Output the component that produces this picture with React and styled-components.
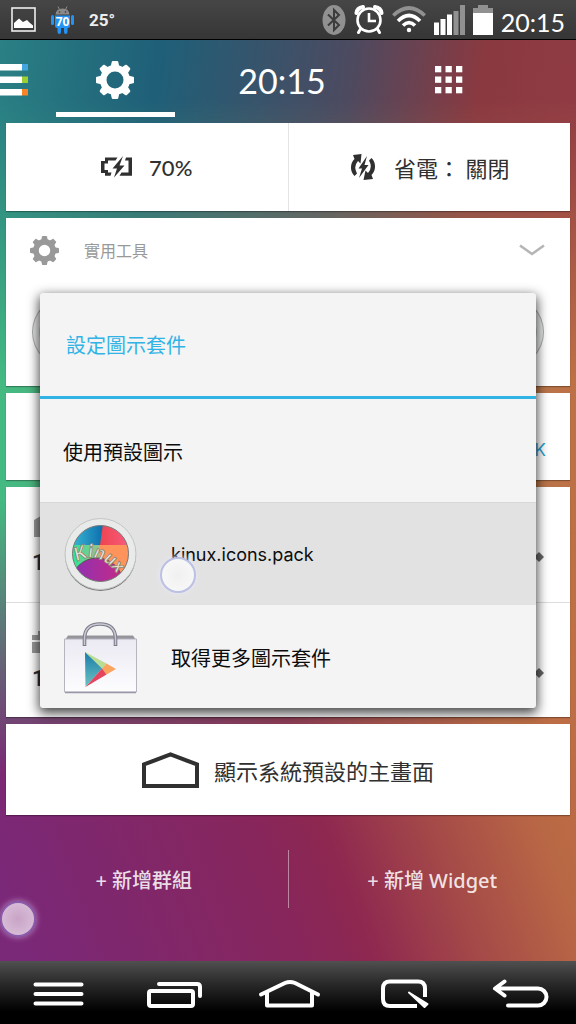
import React from 'react'
import styled, { createGlobalStyle, css } from 'styled-components'

const GlobalStyle = createGlobalStyle`
  * {
    box-sizing: border-box;
  }
  body {
    margin: 0;
    background-color: black;
    font-family: Inter, 'Noto Sans CJK TC', sans-serif;
  }
  button {
    border: 0;
    padding: 0;
    background: none;
    color: inherit;
    font: inherit;
    cursor: pointer;
  }
  h2, p, ul {
    margin: 0;
    padding: 0;
    font-weight: 400;
  }
  svg {
    display: block;
    flex: none;
  }
`

const Screen = styled.div`
  display: flex;
  flex-direction: column;
  min-height: 100vh;
`

const StatusBar = styled.div`
  display: flex;
  align-items: center;
  justify-content: space-between;
  height: 40px;
  padding: 0 11px;
  border-bottom: 1px solid black;
  background: linear-gradient(#464646, #363636);
  color: white;
`
const StatusGroup = styled.div`
  display: flex;
  align-items: center;
  gap: ${props => props.$gap}px;
`
const Temperature = styled.span`
  font: 700 17px/24px Roboto, sans-serif;
  color: #eee;
`
const StatusTime = styled.span`
  font: 25px/28px Lato, sans-serif;
  padding-top: 4px;
`

// three colour bands, the upper and lower ones fade into the middle one
const Wallpaper = styled.main`
  position: relative;
  isolation: isolate;
  flex: 1;
  background: linear-gradient(90deg, #43ba82, #7f9068 50%, #bf7045);
  &::before,
  &::after {
    content: '';
    position: absolute;
    inset: 0;
    z-index: -1;
  }
  &::before {
    background: linear-gradient(
      98deg,
      #2a8084,
      #1f5f78 23%,
      #4c4a60 50%,
      #8a3940 69%,
      #983e49
    );
    mask-image: linear-gradient(black 60px, transparent 340px);
  }
  &::after {
    background: linear-gradient(
      70deg,
      #7a2878 3%,
      #87265c 33%,
      #8e2850 41%,
      #a54a48 53%,
      #b96845 65%,
      #bf6f44 75%
    );
    mask-image: linear-gradient(transparent 50%, black 80%);
  }
`

const Header = styled.header`
  display: flex;
  height: 77px;
  margin-bottom: 6px;
  padding-right: 44px;
  color: white;
`
const DrawerButton = styled.button`
  width: 32px;
  padding-top: 3px;
`
const Tab = styled.button`
  display: flex;
  flex: 1;
  align-items: center;
  justify-content: center;
  margin: 0 24px;
  padding-top: 8px;
  border-bottom: 5px solid ${props => (props.$active ? 'white' : 'transparent')};
  font: 34px Lato, sans-serif;
`

const Cards = styled.div`
  display: flex;
  flex-direction: column;
  gap: 7px;
  padding: 0 6px;
`
const Card = styled.section`
  display: flex;
  flex-direction: ${props => (props.$column ? 'column' : 'row')};
  min-height: ${props => props.$height}px;
  background-color: white;
  box-shadow: 0 1px 1px rgba(0, 0, 0, 0.3);
  color: #303030;
`
const CardButton = styled.button`
  display: flex;
  flex: 1;
  align-items: center;
  justify-content: center;
  gap: ${props => props.$gap || 17}px;
  font: ${props => (props.$medium ? 500 : 400)} 22px Lato, 'Noto Sans CJK TC', sans-serif;
  & + & {
    border-left: 1px solid #e4e4e4;
  }
`
const GroupHeader = styled.button`
  display: flex;
  align-items: center;
  gap: 25px;
  height: 64px;
  padding: 0 25px 0 24px;
  color: #999;
  font-size: 16px;
  svg:last-child {
    margin-left: auto;
  }
`
const AppRow = styled.div`
  display: flex;
  justify-content: space-between;
  padding: 14px 26px;
`
const AppButton = styled.button`
  width: 72px;
  height: 72px;
  border: 1px solid #aaa;
  border-bottom-color: #777;
  border-radius: 50%;
  background: radial-gradient(#777 0 27px, #e6e8e8 29px);
`
const OkCard = styled(Card)`
  align-items: flex-end;
  justify-content: flex-end;
  padding: 18px 24px;
`
const OkButton = styled.button`
  color: #2a9fd0;
  font-size: 17px;
  line-height: 24px;
`
const PlaceRow = styled.button`
  display: flex;
  flex: 1;
  align-items: center;
  justify-content: space-between;
  padding: 2px 26px 0;
  text-align: left;
  color: #777;
  & + & {
    border-top: 1px solid #ddd;
  }
`
const Count = styled.p`
  padding-top: 12px;
  color: #303030;
  font: 500 22px/28px Roboto, sans-serif;
`
const RowArrow = styled.svg`
  margin-top: 24px;
`

const Actions = styled.div`
  display: flex;
  align-items: center;
  padding: 35px 0 53px;
`
const Action = styled.button`
  flex: 1;
  height: 58px;
  color: rgba(255, 255, 255, 0.85);
  font: 500 20px 'Noto Sans', 'Noto Sans CJK TC', sans-serif;
  & + & {
    border-left: 1px solid rgba(255, 255, 255, 0.45);
  }
`

const Overlay = styled.div`
  position: absolute;
  inset: 0;
  display: flex;
  align-items: center;
  padding: 0 40px;
`
const Dialog = styled.div`
  flex: 1;
  border-radius: 3px;
  background-color: #f4f4f4;
  box-shadow: 0 4px 12px 1px rgba(0, 0, 0, 0.75);
  color: #0c0c0c;
`
const DialogTitle = styled.h2`
  display: flex;
  align-items: center;
  height: 106px;
  padding: 0 26px;
  border-bottom: 3px solid #31b3e6;
  color: #31b3e6;
  font-size: 20px;
`
const OptionList = styled.ul`
  list-style: none;
`
const Option = styled.button`
  display: flex;
  align-items: center;
  gap: 33px;
  width: 100%;
  height: 103px;
  padding: 2px 23px 0;
  font-size: ${props => (props.$latin ? 18 : 20)}px;
  ${props =>
    props.$pressed &&
    css`
      background-color: #e2e2e2;
      box-shadow: inset 0 1px #d8d8d8;
    `}
`

const Touch = styled.span`
  position: absolute;
  left: ${props => props.$x}px;
  top: ${props => props.$y}px;
  width: 36px;
  height: 36px;
  border: 2px solid ${props => (props.$faded ? '#8a5cab' : '#bcc0e2')};
  border-radius: 50%;
  background: ${props =>
    props.$faded
      ? 'radial-gradient(#c9a3c6, #dcc5dd)'
      : 'radial-gradient(#f0f0f0, #fafafa)'};
  box-shadow: 0 0 6px ${props => (props.$faded ? '#b98fc4' : '#e8e8f8')};
  pointer-events: none;
`

const NavBar = styled.nav`
  display: grid;
  grid-template-columns: repeat(5, 1fr);
  height: 63px;
  background: linear-gradient(#505050, #2a2a2a 35%, black 80%);
`
const NavButton = styled.button`
  display: flex;
  align-items: center;
  justify-content: center;
`

const teeth = [0, 45, 90, 135, 180, 225, 270, 315]

function Gear({ size, hole }) {
  return (
    <svg width={size} height={size} viewBox="0 0 38 38" fill="currentColor">
      {teeth.map(angle => (
        <path
          key={angle}
          d="M14.6 6 L15.8 .8 Q16 0 16.800 0 H21.200 Q22 0 22.200 .8 L23.400 6Z"
          transform={`rotate(${angle} 19 19)`}
        />
      ))}
      <circle
        cx="19"
        cy="19"
        r={(15 + hole) / 2}
        fill="none"
        stroke="currentColor"
        strokeWidth={15 - hole}
      />
    </svg>
  )
}

function PictureIcon() {
  return (
    <svg width="25" height="25" viewBox="0 0 25 25">
      <rect x="1" y="1" width="23" height="23" fill="none" stroke="#eee" strokeWidth="1.6" />
      <path d="M3 21 V16 L8 11.5 L12 15 L16 13 L19 16 L22 18.5 V21Z" fill="white" />
    </svg>
  )
}

function RobotIcon() {
  return (
    <svg width="23" height="28" viewBox="0 0 23 28">
      <path d="M4.5 8.5 Q5 2.5 11.5 2.5 T18.5 8.5Z" fill="#8a8a8a" />
      <path d="M7 .5 L8.5 3.5 M16 .5 L14.5 3.5" stroke="#8a8a8a" />
      <circle cx="8.5" cy="6" r=".8" fill="#333" />
      <circle cx="14.5" cy="6" r=".8" fill="#333" />
      <g fill="#2393f5">
        <path d="M4 9.500 H19 V20 Q19 22 17 22 H16.500 V26 Q16.500 28 14.700 28 T13 26 V22 H10 V26 Q10 28 8.300 28 T6.500 26 V22 H6 Q4 22 4 20Z" />
        <rect y="9" width="3" height="10" rx="1.500" />
        <rect x="20" y="9" width="3" height="10" rx="1.500" />
      </g>
      <text
        x="11.500"
        y="19.500"
        textAnchor="middle"
        fontFamily="Open Sans, sans-serif"
        fontSize="12"
        fontWeight="700"
        fill="white"
      >
        70
      </text>
    </svg>
  )
}

function BluetoothIcon() {
  return (
    <svg width="24" height="30" viewBox="0 0 24 30">
      <ellipse cx="12" cy="15" rx="11.500" ry="15" fill="#919191" />
      <path d="M6 9.500 L17 20 L12 25 V5 L17 10 L6 20.500" fill="none" stroke="#3c3c3c" strokeWidth="2" />
    </svg>
  )
}

function AlarmIcon() {
  return (
    <svg width="30" height="29" viewBox="0 0 30 29" fill="none" stroke="white">
      <circle cx="15" cy="15" r="11.500" strokeWidth="2.600" />
      <path d="M15 8 V16 H22" strokeWidth="2.600" />
      <path d="M2.500 8 Q3 3 9 2 M27.500 8 Q27 3 21 2" strokeWidth="4" strokeLinecap="round" />
      <path d="M6.500 24 L4.500 27.500 M23.500 24 L25.500 27.500" strokeWidth="3" strokeLinecap="round" />
    </svg>
  )
}

function WifiIcon() {
  return (
    <svg width="34" height="27" viewBox="0 0 34 27" fill="none" stroke="white" strokeWidth="3.600">
      <path d="M1.300 9.500 Q17 -5.500 32.700 9.500" stroke="#919191" />
      <path d="M6 15 Q17 4 28 15" />
      <path d="M11 19.500 Q17 13.500 23 19.500" />
      <circle cx="17" cy="24" r="2.200" fill="white" stroke="none" />
    </svg>
  )
}

function SignalIcon() {
  return (
    <svg width="31" height="30" viewBox="0 0 31 30" fill="white">
      <rect y="17.500" width="5" height="12.500" />
      <rect x="6.500" y="14" width="5" height="16" />
      <rect x="13" y="9.500" width="5" height="20.500" />
      <rect x="19.500" y="6" width="5" height="24" fill="#919191" />
      <rect x="26" width="5" height="30" fill="#919191" />
    </svg>
  )
}

function BatteryIcon() {
  return (
    <svg width="20" height="30" viewBox="0 0 20 30">
      <path d="M5 0 H15 V3 H20 V8 H0 V3 H5Z" fill="#919191" />
      <rect y="8" width="20" height="22" fill="white" />
    </svg>
  )
}

function DrawerIcon() {
  return (
    <svg width="28" height="32" viewBox="0 0 28 32">
      <path d="M0 0 H22 V6.500 H0Z M0 12.500 H22 V19 H0Z M0 25 H22 V31.500 H0Z" fill="white" />
      <rect x="22" width="6" height="6.500" fill="#45a5de" />
      <rect x="22" y="12.500" width="6" height="6.500" fill="#9bcf35" />
      <rect x="22" y="25" width="6" height="6.500" fill="#fb8427" />
    </svg>
  )
}

function GridIcon() {
  return (
    <svg width="28" height="28" viewBox="0 0 28 28" fill="white">
      {[0, 10.5, 21].map(y =>
        [0, 10.5, 21].map(x => <rect key={`${x} ${y}`} x={x} y={y} width="6.300" height="6.300" />)
      )}
    </svg>
  )
}

function ChargeIcon() {
  return (
    <svg width="31" height="22" viewBox="0 0 31 22" fill="#303030">
      <path d="M16.500 1.500 L14.500 4.500 H7 V7.500 H3.500 V14 H7 V16.500 H10.500 L9.500 19.800 H4 V17 H0 V5 H4 V1.500Z" />
      <path d="M22 0 L11.500 12.500 H16 L13 21.500 L23.500 9.500 H18.500Z" />
      <path d="M25 1.500 H31 V19.800 H18.500 L20.500 16.500 H27.500 V4.500 H24Z" />
    </svg>
  )
}

function PowerSaveIcon() {
  return (
    <svg width="28" height="26" viewBox="0 0 28 26" fill="#303030">
      <path d="M5.500 22 A12 12 0 0 1 5.500 5 L4 1 L12.500 0 L11.500 9.500 L9 7 Q4 12.500 8 19.500Z" />
      <path d="M22.500 4 A12 12 0 0 1 22.500 21 L24 25 L14.500 26 L16.500 16.500 L19 19 Q24 13.500 20 6.500Z" />
      <path d="M18 2 L9.500 14.500 H13 L10 24 L19.500 11 H15.500Z" />
    </svg>
  )
}

function ChevronDown() {
  return (
    <svg width="26" height="12" viewBox="0 0 26 12" fill="none" stroke="#b5b5b5" strokeWidth="2.600">
      <path d="M1 1.500 L13 10 L25 1.500" />
    </svg>
  )
}

function KinuxIcon() {
  return (
    <svg width="75" height="75" viewBox="0 0 75 75">
      <defs>
        <linearGradient id="blue">
          <stop offset="0" stopColor="#48cbe0" />
          <stop offset="1" stopColor="#0b6cab" />
        </linearGradient>
        <linearGradient id="red">
          <stop offset="0" stopColor="#ee4450" />
          <stop offset="1" stopColor="#fb638c" />
        </linearGradient>
        <linearGradient id="green">
          <stop offset="0" stopColor="#00f39b" />
          <stop offset="1" stopColor="#a5bd8c" />
        </linearGradient>
        <linearGradient id="purple">
          <stop offset="0" stopColor="#8b32b5" />
          <stop offset="1" stopColor="#c52a86" />
        </linearGradient>
        <clipPath id="disc">
          <circle cx="37.500" cy="36.500" r="28" />
        </clipPath>
        <path id="arc" d="M14 45 Q37 31 58 62" />
      </defs>
      <circle cx="37.500" cy="38.500" r="35.500" fill="#777" />
      <circle cx="37.500" cy="37" r="35.500" fill="#e8ebea" stroke="#c4c6c5" />
      <g clipPath="url(#disc)">
        <rect width="41" height="28" fill="url(#blue)" />
        <path d="M41 0 H75 V28 H37Z" fill="url(#red)" />
        <rect y="28" width="38" height="47" fill="url(#green)" />
        <rect x="37" y="28" width="38" height="47" fill="#ff935c" />
        <circle cx="34" cy="67" r="26" fill="url(#purple)" stroke="#60504a" />
      </g>
      <circle cx="37.500" cy="36.500" r="28" fill="none" stroke="#777" />
      <text
        fontFamily="Lato, sans-serif"
        fontSize="19"
        fontWeight="700"
        fontStyle="italic"
        fill="#e8e8dc"
        stroke="#8c8270"
        strokeWidth=".8"
      >
        <textPath href="#arc">Kinux</textPath>
      </text>
    </svg>
  )
}

function PlayBagIcon() {
  return (
    <svg width="75" height="72" viewBox="0 0 75 72">
      <defs>
        <linearGradient id="bag" x1="0" y1="0" x2="0" y2="1">
          <stop offset="0" stopColor="#ebe9f2" />
          <stop offset="1" stopColor="#fdfdff" />
        </linearGradient>
        <linearGradient id="playBlue" x1="0" y1="0" x2="0" y2="1">
          <stop offset="0" stopColor="#1a7cab" />
          <stop offset="1" stopColor="#6cc3c0" />
        </linearGradient>
      </defs>
      <path d="M5 13.500 H70 L73 18 H2Z" fill="#95949a" />
      <path d="M1.500 17 H73.500 V70 H1.500Z" fill="url(#bag)" stroke="#b5b4bf" />
      <path d="M2 70.500 H73" stroke="#9896a8" strokeWidth="1.500" />
      <path d="M21.500 24 V16 Q22 2 37 2 T52.500 16 V24" fill="none" stroke="#7c7b88" strokeWidth="3.600" />
      <path d="M21.500 23 V16 Q22 2 37 2 T52.500 16 V23" fill="none" stroke="#c9c8d5" strokeWidth="1.500" />
      <path d="M22 30 L39.500 46 L22.500 65Z" fill="url(#playBlue)" />
      <path d="M22 30 L43.500 41.500 L39.500 47Z" fill="#b9dd94" />
      <path d="M43.500 41.500 L53 47 L43.500 52.500 L39 47Z" fill="#fba45f" />
      <path d="M39 46.500 L43.500 52.500 L22.500 65Z" fill="#e5445f" />
    </svg>
  )
}

const navIcons = [
  {
    label: '選單',
    shape: <path d="M13.500 7.500 H59.500 M13.500 17 H59.500 M13.500 26.500 H59.500" />,
  },
  {
    label: '最近使用',
    shape: (
      <>
        <rect x="12" y="14" width="44" height="15" rx="2" />
        <path d="M22 7 H60 Q63 7 63 10 V19" />
      </>
    ),
  },
  {
    label: '主畫面',
    shape: <path d="M9 17.500 L33 6 Q38 4 43 6 L66 17.500 M15 16 V28.500 H60 V16" />,
  },
  {
    label: 'QuickMemo',
    shape: (
      <>
        <path
          d="M58 20 V11.500 Q58 4.500 51 4.500 H23 Q16 4.500 16 11.500 V22 Q16 29 23 29 H50"
          strokeLinecap="butt"
        />
        <path d="M42 15.500 L57.500 30 L60.500 27Z" fill="white" strokeWidth="2" />
      </>
    ),
  },
  {
    label: '返回',
    shape: <path d="M22.500 4.500 L13 11.500 L22.500 18.500 M14 11.500 H56 A8.500 8.500 0 0 1 56 28.500 H26" />,
  },
]

function App() {
  return (
    <Screen>
      <GlobalStyle />
      <StatusBar>
        <StatusGroup $gap={15}>
          <PictureIcon />
          <RobotIcon />
          <Temperature>25°</Temperature>
        </StatusGroup>
        <StatusGroup $gap={8}>
          <BluetoothIcon />
          <AlarmIcon />
          <WifiIcon />
          <SignalIcon />
          <BatteryIcon />
          <StatusTime>20:15</StatusTime>
        </StatusGroup>
      </StatusBar>
      <Wallpaper>
        <Header>
          <DrawerButton aria-label="開啟選單">
            <DrawerIcon />
          </DrawerButton>
          <Tab $active aria-label="設定">
            <Gear size={38} hole={8.5} />
          </Tab>
          <Tab>20:15</Tab>
          <Tab aria-label="應用程式">
            <GridIcon />
          </Tab>
        </Header>
        <Cards>
          <Card $height={88}>
            <CardButton $medium>
              <ChargeIcon />
              70%
            </CardButton>
            <CardButton>
              <PowerSaveIcon />
              省電： 關閉
            </CardButton>
          </Card>
          <Card $height={168} $column>
            <GroupHeader>
              <Gear size={29} hole={7.5} />
              實用工具
              <ChevronDown />
            </GroupHeader>
            <AppRow>
              <AppButton aria-label="工具 1" />
              <AppButton aria-label="工具 2" />
              <AppButton aria-label="工具 3" />
              <AppButton aria-label="工具 4" />
            </AppRow>
          </Card>
          <OkCard $height={87}>
            <OkButton>OK</OkButton>
          </OkCard>
          <Card $height={230} $column>
            <PlaceRow>
              <div>
                <svg width="28" height="24" viewBox="0 0 28 24" fill="#999">
                  <path d="M2 24 V7 L14 0 L26 7 V24Z" />
                </svg>
                <Count>1</Count>
              </div>
              <RowArrow width="10" height="10" viewBox="0 0 10 10" fill="#666">
                <path d="M5 0 L10 5 L5 10 L0 5Z" />
              </RowArrow>
            </PlaceRow>
            <PlaceRow>
              <div>
                <svg width="28" height="24" viewBox="0 0 28 24" fill="#999">
                  <path d="M0 6 H6 V2 H22 V6 H28 V11 H0Z M0 13 H28 V24 H0Z" />
                </svg>
                <Count>1</Count>
              </div>
              <RowArrow width="10" height="10" viewBox="0 0 10 10" fill="#666">
                <path d="M5 0 L10 5 L5 10 L0 5Z" />
              </RowArrow>
            </PlaceRow>
          </Card>
          <Card $height={91}>
            <CardButton $gap={15}>
              <svg width="57" height="36" viewBox="0 0 57 36" fill="none" stroke="#303030" strokeWidth="4">
                <path d="M2 34 V12.500 L28.500 2.500 L55 12.500 V34Z" />
              </svg>
              顯示系統預設的主畫面
            </CardButton>
          </Card>
        </Cards>
        <Actions>
          <Action>+ 新增群組</Action>
          <Action>+ 新增 Widget</Action>
        </Actions>
        <Overlay>
          <Dialog role="dialog" aria-labelledby="dialog-title">
            <DialogTitle id="dialog-title">設定圖示套件</DialogTitle>
            <OptionList>
              <li>
                <Option>使用預設圖示</Option>
              </li>
              <li>
                <Option $pressed $latin>
                  <KinuxIcon />
                  kinux.icons.pack
                </Option>
              </li>
              <li>
                <Option>
                  <PlayBagIcon />
                  取得更多圖示套件
                </Option>
              </li>
            </OptionList>
          </Dialog>
        </Overlay>
        <Touch $x={160} $y={517} />
        <Touch $x={0} $y={861} $faded />
      </Wallpaper>
      <NavBar>
        {navIcons.map(({ label, shape }) => (
          <NavButton key={label} aria-label={label}>
            <svg
              width="72"
              height="32"
              viewBox="0 0 72 32"
              fill="none"
              stroke="white"
              strokeWidth="4"
              strokeLinecap="round"
              strokeLinejoin="round"
            >
              {shape}
            </svg>
          </NavButton>
        ))}
      </NavBar>
    </Screen>
  )
}

export default App
